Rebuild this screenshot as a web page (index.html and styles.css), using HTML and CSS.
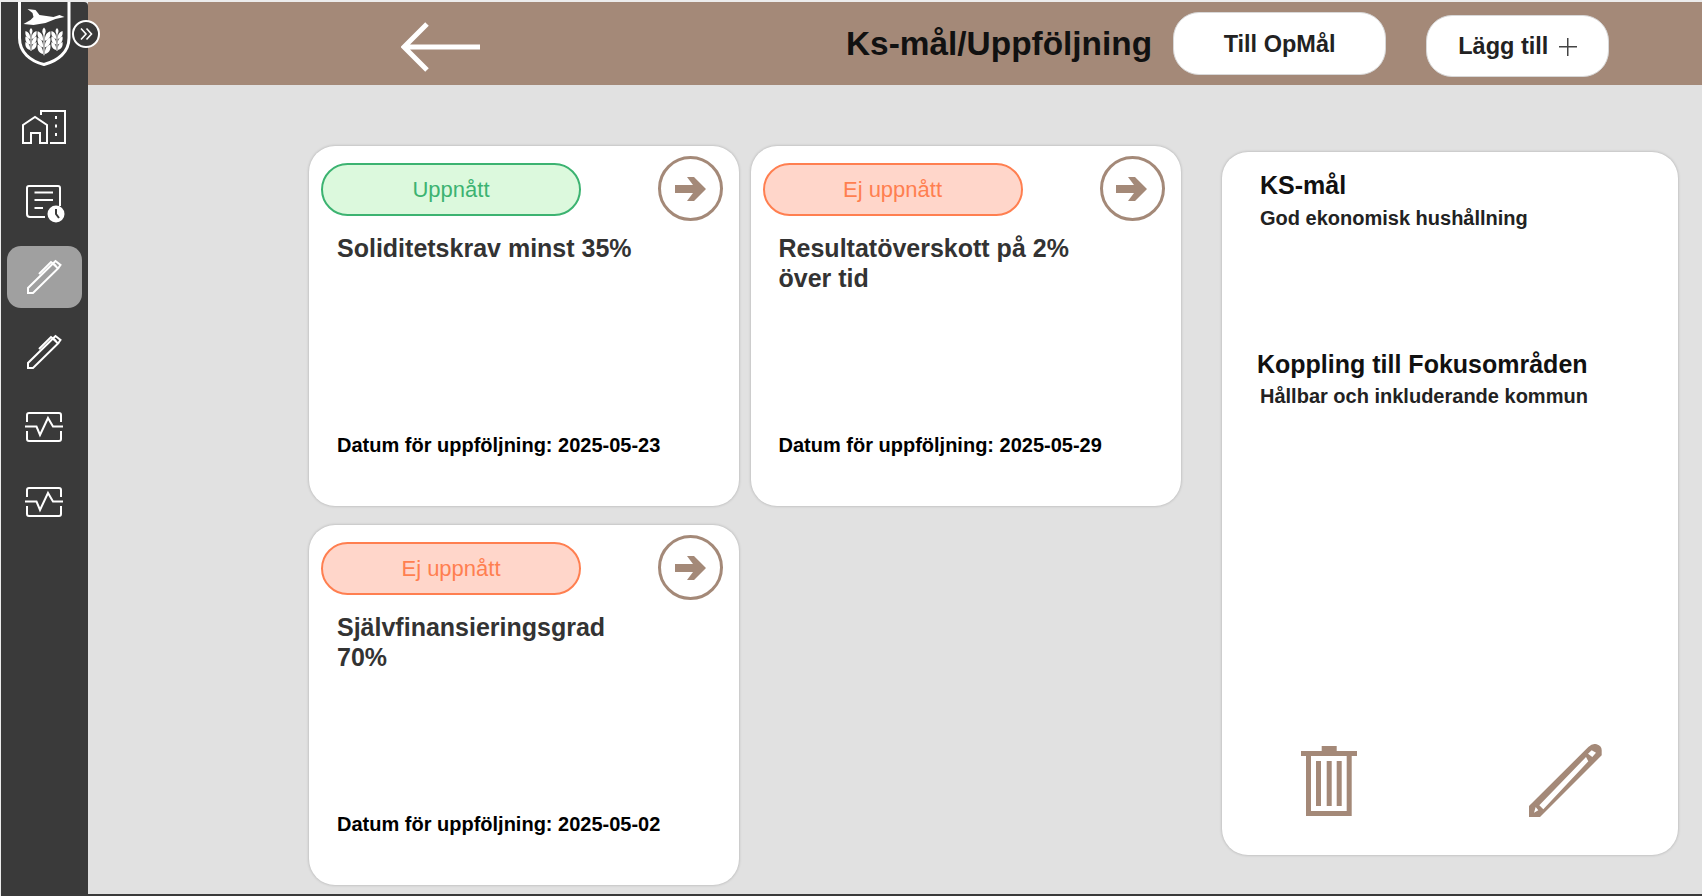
FILE: index.html
```html
<!DOCTYPE html>
<html lang="sv">

<head>
    <meta charset="UTF-8">
    <title>Ks-mål/Uppföljning</title>
    <link rel="stylesheet" href="styles.css">
</head>

<body>
    <div class="app">
        <aside class="sidebar">
            <div class="logo">
                <svg width="56" height="66" viewBox="0 0 56 66">
                    <path d="M2.500 -2V36C2.500 50 13 59 27 62.500C41 59 52 50 52 36V-2" fill="#3a3a3a" stroke="#fff" stroke-width="3"/>
                    <path d="M10.500 7L18.500 8L22.500 13L36.500 15L42.500 13L47.500 15L38.500 17L28.500 21L16.500 23L6.500 22L13.500 18L16.500 15L15.500 11Z" fill="#fff"/>
                    <g id="ear" class="wheat" transform="translate(14 28)">
                        <path d="M-0.500 0H0.500V21H-0.500Z"/>
                        <path d="M0 -2C2 0 2 2 0 4.500C-2 2 -2 0 0 -2Z"/>
                        <path d="M-0.700 9C-5.500 8 -6 4 -5.500 1C-2.500 2 -0.700 4 -0.700 9ZM0.700 9C5.500 8 6 4 5.500 1C2.500 2 0.700 4 0.700 9Z"/>
                        <path d="M-0.700 14.500C-5.500 13.500 -6 9.500 -5.500 6.500C-2.500 7.500 -0.700 9.500 -0.700 14.500ZM0.700 14.500C5.500 13.500 6 9.500 5.500 6.500C2.500 7.500 0.700 9.500 0.700 14.500Z"/>
                        <path d="M-0.700 20C-5.500 19 -6 15 -5.500 12C-2.500 13 -0.700 15 -0.700 20ZM0.700 20C5.500 19 6 15 5.500 12C2.500 13 0.700 15 0.700 20Z"/>
                    </g>
                    <use href="#ear" transform="translate(26 0)"/>
                    <use href="#ear" transform="translate(27 28) scale(1.150 1.200) translate(-14 -28)"/>
                </svg>
            </div>
            <div class="expand">
                <svg width="16" height="16" viewBox="0 0 16 16"><path d="M3 2.500L8 8L3 13.500M8.500 2.500L13.500 8L8.500 13.500" fill="none" stroke="#fff" stroke-width="1.600"/></svg>
            </div>
            <nav class="nav">
                <div class="nav-item">
                    <svg width="44" height="36" viewBox="0 0 44 36" class="nav-icon">
                        <path d="M1 34V16L13 8L25 16V34H18V24H9V34Z"/>
                        <path d="M19 6V2H43V34H28M34 7V10M34 15.500V18.500M34 24V27"/>
                    </svg>
                </div>
                <div class="nav-item">
                    <svg width="38" height="40" viewBox="0 -3 38 40" class="nav-icon">
                        <path d="M20 32H5Q2 32 2 29V3Q2 1 4 1H33Q35 1 35 3V21"/>
                        <path d="M9.500 7.500H28M9.500 15H28M9.500 23H18"/>
                        <circle cx="31" cy="29" r="8.500" fill="#fff" stroke="none"/>
                        <path d="M31 24V29L34 33" stroke="#3a3a3a"/>
                    </svg>
                </div>
                <div class="nav-item active">
                    <svg width="34" height="34" viewBox="0 0 34 34" class="nav-icon">
                        <path d="M1 33V28L26 3.500L31 8.500L6 33Z"/>
                        <path d="M12 14L24 2L29 6M26 3.500L28.500 1L33.500 5L31 8.500"/>
                    </svg>
                </div>
                <div class="nav-item">
                    <svg width="34" height="34" viewBox="0 0 34 34" class="nav-icon">
                        <path d="M1 33V28L26 3.500L31 8.500L6 33Z"/>
                        <path d="M12 14L24 2L29 6M26 3.500L28.500 1L33.500 5L31 8.500"/>
                    </svg>
                </div>
                <div class="nav-item">
                    <svg width="38" height="30" viewBox="0 0 38 30" class="nav-icon">
                        <path d="M2 10V3Q2 1 4 1H34Q36 1 36 3V10M2 19V27Q2 29 4 29H34Q36 29 36 27V19"/>
                        <path d="M0 14.500H11.500L15 23L23 6L28 14.500H38"/>
                    </svg>
                </div>
                <div class="nav-item">
                    <svg width="38" height="30" viewBox="0 0 38 30" class="nav-icon">
                        <path d="M2 10V3Q2 1 4 1H34Q36 1 36 3V10M2 19V27Q2 29 4 29H34Q36 29 36 27V19"/>
                        <path d="M0 14.500H11.500L15 23L23 6L28 14.500H38"/>
                    </svg>
                </div>
            </nav>
        </aside>

        <div class="main">
            <header class="topbar">
                <svg class="back" width="80" height="50" viewBox="0 0 80 50">
                    <path d="M79 25H4M26 2L3 25L26 48" fill="none" stroke="#fff" stroke-width="5"/>
                </svg>
                <h1 class="page-title">Ks-mål/Uppföljning</h1>
                <button class="btn btn-op">Till OpMål</button>
                <button class="btn btn-add">Lägg till <span class="plus"></span></button>
            </header>

            <div class="content">
                <section class="cards">
                    <article class="card">
                        <div class="card-top">
                            <span class="status ok">Uppnått</span>
                            <span class="go">
                                <svg width="32" height="24" viewBox="0 0 32 24"><path d="M0 8H18L12 0H19L31 12L19 24H12L18 16H0Z" fill="#a48978"/></svg>
                            </span>
                        </div>
                        <h2 class="card-title">Soliditetskrav minst 35%</h2>
                        <p class="card-date">Datum för uppföljning: 2025-05-23</p>
                    </article>
                    <article class="card">
                        <div class="card-top">
                            <span class="status fail">Ej uppnått</span>
                            <span class="go">
                                <svg width="32" height="24" viewBox="0 0 32 24"><path d="M0 8H18L12 0H19L31 12L19 24H12L18 16H0Z" fill="#a48978"/></svg>
                            </span>
                        </div>
                        <h2 class="card-title">Resultatöverskott på 2% över tid</h2>
                        <p class="card-date">Datum för uppföljning: 2025-05-29</p>
                    </article>
                    <article class="card">
                        <div class="card-top">
                            <span class="status fail">Ej uppnått</span>
                            <span class="go">
                                <svg width="32" height="24" viewBox="0 0 32 24"><path d="M0 8H18L12 0H19L31 12L19 24H12L18 16H0Z" fill="#a48978"/></svg>
                            </span>
                        </div>
                        <h2 class="card-title">Självfinansieringsgrad 70%</h2>
                        <p class="card-date">Datum för uppföljning: 2025-05-02</p>
                    </article>
                </section>

                <section class="detail">
                    <h3 class="detail-head">KS-mål</h3>
                    <p class="detail-text">God ekonomisk hushållning</p>
                    <h3 class="detail-head link-head">Koppling till Fokusområden</h3>
                    <p class="detail-text">Hållbar och inkluderande kommun</p>
                    <div class="detail-actions">
                        <svg width="56" height="71" viewBox="0 0 56 71">
                            <path d="M0 5H20.700V0H35.700V5H56V10H50.700V70H5V10H0ZM10 10V65H45.700V10ZM15 15H20V60H15ZM25.700 15H30.700V60H25.700ZM35.700 15H40.700V60H35.700Z" fill="#a48978" fill-rule="evenodd"/>
                        </svg>
                        <svg width="73" height="73" viewBox="0 0 73 73">
                            <path d="M0 73V62L59.300 3Q64 -1 67.700 0.300Q72.700 2 72.700 6.300V11.300L11 73ZM10.300 61.300L14.300 65.300L59.300 17.300L57 13ZM6.700 63L5 68.700L9.300 66.300ZM59 9.700L63.300 13L67 8.700L62.700 6.300Z" fill="#a48978" fill-rule="evenodd"/>
                        </svg>
                    </div>
                </section>
            </div>
        </div>
    </div>
</body>

</html>
```

FILE: styles.css
```css
html, body {
    margin: 0;
    height: 100%;
    background-color: #ececec;
    overflow: hidden;
}

body {
    font-family: "Liberation Sans", Arial, sans-serif;
    color: #333;
}

.app {
    display: flex;
    height: 892px;
    margin-top: 2px;
    margin-left: 1px;
    border-bottom: 2px solid #3a3a3a;
}

.sidebar {
    position: relative;
    width: 87px;
    flex-shrink: 0;
    background-color: #3a3a3a;
    border-top-right-radius: 4px;
}

.logo {
    display: flex;
    justify-content: center;
    height: 94px;
    box-sizing: border-box;
}

.logo svg {
    overflow: hidden;
}

.wheat path {
    fill: #fff;
}

.expand {
    position: absolute;
    top: 18px;
    left: 71px;
    width: 28px;
    height: 28px;
    display: flex;
    align-items: center;
    justify-content: center;
    background-color: #3a3a3a;
    border: 2px solid #fff;
    border-radius: 50%;
    box-sizing: border-box;
}

.nav {
    display: flex;
    flex-direction: column;
    gap: 13px;
}

.nav-item {
    height: 62px;
    margin: 0 6px;
    padding-right: 2px;
    box-sizing: border-box;
    display: flex;
    align-items: center;
    justify-content: center;
    border-radius: 14px;
}

.nav-item.active {
    background-color: #a0a0a0;
}

.nav-icon {
    fill: none;
    stroke: #fff;
    stroke-width: 2;
    overflow: visible;
}

.main {
    flex: 1;
    min-width: 0;
    display: flex;
    flex-direction: column;
    background-color: #e1e1e1;
}

.topbar {
    height: 83px;
    flex-shrink: 0;
    display: flex;
    align-items: center;
    background-color: #a48978;
}

.back {
    margin-left: 313px;
    margin-top: 6px;
    flex-shrink: 0;
}

.page-title {
    margin: 0 0 0 365px;
    font-size: 33.400px;
    font-weight: bold;
    color: #111;
    white-space: nowrap;
}

.btn {
    border: 1px solid #d8d8d8;
    background-color: #fff;
    border-radius: 26px;
    font-family: inherit;
    font-size: 23.500px;
    font-weight: bold;
    color: #222;
    padding: 2px 0 0;
}

.btn-op {
    width: 213px;
    height: 63px;
    margin-left: 21px;
}

.btn-add {
    width: 183px;
    height: 62px;
    margin-left: 40px;
    margin-top: 4px;
}

.plus {
    display: inline-block;
    width: 18px;
    height: 18px;
    margin-left: 4px;
    vertical-align: -2px;
    background:
        linear-gradient(#444, #444) center / 18px 1.500px no-repeat,
        linear-gradient(#444, #444) center / 1.500px 18px no-repeat;
}

.content {
    flex: 1;
    display: flex;
    align-items: flex-start;
    padding: 61px 0 0 221px;
}

.cards {
    display: grid;
    grid-template-columns: 430px 430px;
    grid-auto-rows: 360px;
    gap: 19px 11.500px;
}

.card {
    background-color: #fff;
    border-radius: 26px;
    box-shadow: 0 0 3px rgba(0, 0, 0, 0.25);
    padding: 10px 16px 0 12px;
    display: flex;
    flex-direction: column;
    box-sizing: border-box;
}

.card-top {
    display: flex;
    justify-content: space-between;
    align-items: flex-start;
}

.status {
    width: 260px;
    height: 53px;
    margin-top: 7px;
    display: flex;
    align-items: center;
    justify-content: center;
    border-radius: 27px;
    border: 2px solid;
    box-sizing: border-box;
    font-size: 22px;
}

.status.ok {
    background-color: #dcf9dd;
    border-color: #3cb371;
    color: #3cb371;
}

.status.fail {
    background-color: #ffd6ca;
    border-color: #ff7f50;
    color: #ff7f50;
}

.go {
    width: 65px;
    height: 65px;
    display: flex;
    align-items: center;
    justify-content: center;
    border: 3px solid #a48978;
    border-radius: 50%;
    box-sizing: border-box;
}

.card-title {
    margin: 12px 70px 0 16px;
    font-size: 25px;
    line-height: 30px;
    font-weight: bold;
    color: #333;
}

.card-date {
    margin: auto 0 49px 16px;
    font-size: 20px;
    font-weight: bold;
    color: #000;
}

.detail {
    width: 456px;
    height: 703px;
    margin: 6px 0 0 41.500px;
    flex-shrink: 0;
    background-color: #fff;
    border-radius: 26px;
    box-shadow: 0 0 3px rgba(0, 0, 0, 0.25);
    padding: 18px 38px 0;
    box-sizing: border-box;
    display: flex;
    flex-direction: column;
}

.detail-head {
    margin: 0;
    font-size: 25px;
    line-height: 30px;
    font-weight: bold;
    color: #111;
}

.link-head {
    margin: 119px 0 0 -3px;
    white-space: nowrap;
}

.detail-text {
    margin: 6px 0 0;
    font-size: 20px;
    line-height: 24px;
    font-weight: bold;
    color: #222;
    white-space: nowrap;
}

.link-head + .detail-text {
    margin-top: 5px;
}

.detail-actions {
    margin: auto 38px 38px 41px;
    display: flex;
    justify-content: space-between;
    align-items: flex-end;
}
```
